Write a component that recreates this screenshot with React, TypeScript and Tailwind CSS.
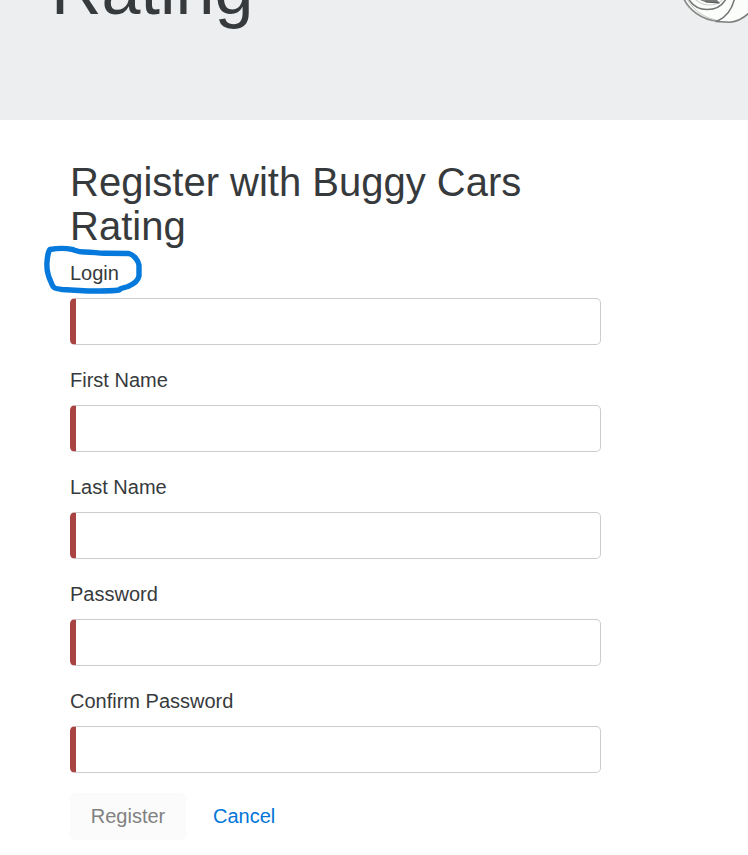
const fields = [
  { id: 'username', label: 'Login', type: 'text' },
  { id: 'firstName', label: 'First Name', type: 'text' },
  { id: 'lastName', label: 'Last Name', type: 'text' },
  { id: 'password', label: 'Password', type: 'password' },
  { id: 'confirmPassword', label: 'Confirm Password', type: 'password' },
];

function Wheel() {
  return (
    <svg className="h-[26px] w-[68px] shrink-0" viewBox="0 0 68 26" fill="none" strokeLinecap="round">
      <path d="M4 0C9 10 19 21 36 21.5L52 22C60 21.5 65 18 70 12V0Z" fill="#fbfdfb" />
      <path d="M4 -1C8 8 21 20.5 38 20.8" stroke="#8b8d8c" strokeWidth="1.8" />
      <path d="M7 -1C11 7 22 17 34 19.5" stroke="#c4c6c5" strokeWidth="1" />
      <path d="M38 20.8C46 17 52 9 54.5 -1" stroke="#727473" strokeWidth="1.5" />
      <path d="M8.5 -1C13 6 19 9.6 27 9.6C36 9.6 42 6 46 -1" stroke="#707271" strokeWidth="1.5" />
      <path d="M15 -1C19 3 23 5 29 5C35 5 40 3 43 -1" stroke="#d0d3d1" strokeWidth="1.2" />
      <path d="M20 0L25 2L40 3.3L37 0Z" fill="#777978" />
      <path d="M26 2L39 3" stroke="#555756" strokeWidth="1" />
      <path d="M36 21.5L50 22.2C58 21.5 64 18 70 12" stroke="#7b7d7c" strokeWidth="1.6" />
    </svg>
  );
}

export default function App() {
  return (
    <div className="relative h-[855px] w-[748px] overflow-hidden bg-white font-['Liberation_Sans',Arial,sans-serif] text-[20px] leading-[30px] text-[#373a3c]">
      <header className="flex h-[120px] items-start justify-between overflow-hidden bg-[#eceeef] pl-[51px]">
        <h1 className="-mt-[48px] text-[70px] leading-[77px]">Rating</h1>
        <Wheel />
      </header>
      <main className="ml-[70px] w-[531px] pt-10">
        <h2 className="mb-2.5 text-[40px] leading-[44px]">Register with Buggy Cars Rating</h2>
        <form>
          {fields.map((f) => (
            <div key={f.id} className="mb-5 flex flex-col">
              <label htmlFor={f.id} className="mb-2.5">{f.label}</label>
              <input
                id={f.id}
                type={f.type}
                className="h-[47px] w-full rounded-[5px] border border-l-[6px] border-[#ccc] border-l-[#a94442] bg-white px-[15px] outline-none"
              />
            </div>
          ))}
          <div className="flex">
            <button type="button" disabled className="h-[47px] w-[116px] rounded-[5px] bg-[#fbfbfb] pb-[2px] text-[#818181]">Register</button>
            <button type="button" className="ml-[5px] h-[47px] px-[22px] pb-[2px] text-[#0275d8]">Cancel</button>
          </div>
        </form>
      </main>
      <svg className="pointer-events-none absolute left-[40px] top-[240px] h-[60px] w-[110px]" viewBox="40 240 110 60" fill="none" stroke="#0579dc" strokeWidth="5.4" strokeLinecap="round" strokeLinejoin="round">
        <path d="M50 249.5C58 248 67 248.3 72 249.4C77 251 80 252.5 85 252C94 252 98 253.5 106 253.2L129 253.5C134 255 138 260 139 265V276C138 281 134 284 128 286.5L121 288.5L119 290C113 291 100 291 88 291L62 289.5C54 288.5 53 288 51 282C47 274 46.5 268 47 262C47.5 255 49 250 50 249.5Z" />
      </svg>
    </div>
  );
}
